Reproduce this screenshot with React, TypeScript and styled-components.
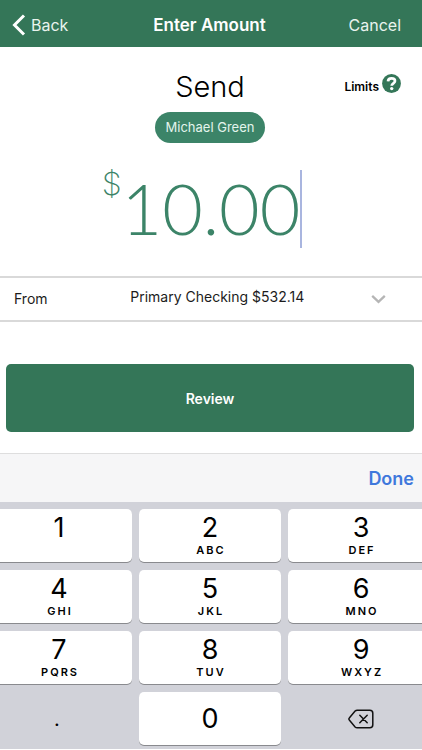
import React, { useState } from "react";
import styled, { createGlobalStyle } from "styled-components";

const GlobalStyle = createGlobalStyle`
  *, *::before, *::after { box-sizing: border-box; }
  body {
    margin: 0;
    background: #fff;
    color: #000;
    font-family: Inter, "Liberation Sans", sans-serif;
    overflow-x: hidden;
  }
  button, input, select { font: inherit; color: inherit; margin: 0; }
  button { border: 0; background: none; padding: 0; cursor: pointer; }
`;

const green = "#347658";
const lightGreen = "#3c8468";

const Screen = styled.div`
  display: flex;
  flex-direction: column;
`;

const NavBar = styled.header`
  display: grid;
  grid-template-columns: 1fr auto 1fr;
  align-items: center;
  height: 47px;
  padding: 2px 15px 0 12px;
  background: ${green};
  color: #fff;
`;

const NavTitle = styled.h1`
  margin: 0;
  font-size: 17px;
  font-weight: 600;
  line-height: 24px;
`;

const NavButton = styled.button<{ $end?: boolean }>`
  display: flex;
  align-items: center;
  gap: 5px;
  justify-self: ${(p) => (p.$end ? "end" : "start")};
  padding-right: ${(p) => (p.$end ? 6 : 0)}px;
  font-size: 16px;
  line-height: 24px;
  color: #e9f3ee;
`;

const Recipient = styled.section`
  display: grid;
  grid-template-columns: 1fr auto 1fr;
  justify-items: center;
  padding: 22px 21px 0 19px;
`;

const Heading = styled.h2`
  grid-column: 2;
  margin: 0;
  font-size: 29px;
  font-weight: 300;
  line-height: 36px;
`;

const LimitsLink = styled.a`
  grid-column: 3;
  justify-self: end;
  align-self: start;
  display: flex;
  align-items: flex-end;
  gap: 3px;
  padding-top: 5px;
  font-size: 12px;
  font-weight: 600;
  line-height: 16px;
  color: #000;
  text-decoration: none;

  svg { margin-bottom: 2px; }
`;

const NamePill = styled.span`
  grid-column: 1 / -1;
  margin-top: 7px;
  padding: 0 11px;
  border-radius: 16px;
  background: ${lightGreen};
  color: #e3f4ec;
  font-size: 13px;
  line-height: 31px;
`;

const AmountRow = styled.label`
  display: flex;
  justify-content: center;
  height: 133px;
  padding: 27px 18px 0 0;
  color: ${lightGreen};
`;

const Currency = styled.span`
  font-size: 32px;
  font-weight: 200;
  line-height: 28px;
`;

const AmountInput = styled.input`
  field-sizing: content;
  min-width: 0;
  height: 76px;
  padding: 0;
  border: 0;
  outline: 0;
  background: none;
  font-family: Lato, Inter, sans-serif;
  font-size: 70px;
  font-weight: 300;
  line-height: 76px;
  caret-color: transparent;
`;

const Caret = styled.span`
  width: 2px;
  height: 78px;
  background: #a9b5df;
`;

const AccountRow = styled.div`
  display: flex;
  align-items: center;
  height: 46px;
  padding: 0 36px 0 14px;
  border-top: 2px solid #d9d9d9;
  border-bottom: 2px solid #d9d9d9;
  font-size: 14px;
  line-height: 20px;
  color: #1c1c1c;
`;

const AccountSelect = styled.select`
  flex: 1;
  min-width: 0;
  height: 40px;
  padding: 0 0 4px 16px;
  border: 0;
  appearance: none;
  background: none;
  text-align: center;
  text-align-last: center;
`;

const ReviewButton = styled.button`
  height: 68px;
  margin: 42px 8px 0 6px;
  border-radius: 5px;
  background: ${green};
  color: #fff;
  font-size: 14px;
  font-weight: 600;
`;

const AccessoryBar = styled.div`
  display: flex;
  align-items: center;
  justify-content: flex-end;
  height: 49px;
  margin-top: 21px;
  padding: 2px 8px 0 0;
  border-top: 1px solid #dedede;
  background: #f6f6f7;
`;

const DoneButton = styled.button`
  font-size: 18px;
  font-weight: 600;
  line-height: 24px;
  color: #3f78dc;
`;

const Keypad = styled.div`
  display: grid;
  grid-template-columns: 146fr 142fr 146fr;
  gap: 8px 7px;
  margin: 0 -12px 0 -14px;
  padding: 7px 0 4px;
  background: #d1d2d9;
`;

const Key = styled.button<{ $plain?: boolean; $centered?: boolean }>`
  display: flex;
  flex-direction: column;
  align-items: center;
  justify-content: ${(p) => (p.$centered ? "center" : "flex-start")};
  height: 53px;
  padding-top: ${(p) => (p.$centered ? 0 : 4)}px;
  border-radius: 5px;
  background: ${(p) => (p.$plain ? "transparent" : "#fff")};
  box-shadow: ${(p) => (p.$plain ? "none" : "0 1px 0 #898a8e")};
`;

const Digit = styled.span`
  font-size: 27px;
  line-height: 30px;
`;

const Point = styled.span`
  padding-right: 4px;
  font-size: 20px;
  line-height: 24px;
`;

const Letters = styled.span`
  padding-left: 2px;
  font-size: 11px;
  font-weight: 600;
  line-height: 14px;
  letter-spacing: 2px;
`;

const KEYS: [string, string][] = [
  ["1", ""],
  ["2", "ABC"],
  ["3", "DEF"],
  ["4", "GHI"],
  ["5", "JKL"],
  ["6", "MNO"],
  ["7", "PQRS"],
  ["8", "TUV"],
  ["9", "WXYZ"],
];

const BackIcon = () => (
  <svg width="14" height="22" viewBox="0 0 14 22" fill="none" aria-hidden="true">
    <path d="M12 1.500 2.500 11l9.500 9.500" stroke="#fff" strokeWidth="3" />
  </svg>
);

const HelpIcon = () => (
  <svg width="19" height="19" viewBox="0 0 19 19" fill="none" aria-hidden="true">
    <circle cx="9.500" cy="9.500" r="9.400" fill={green} />
    <path
      d="M6 7.400C6.100 5.400 7.500 4.300 9.500 4.300c2 0 3.500 1 3.500 2.800 0 2.400-3.300 2.200-3.300 4.700"
      stroke="#fff"
      strokeWidth="2.700"
    />
    <circle cx="9.700" cy="14.600" r="1.700" fill="#fff" />
  </svg>
);

const ChevronIcon = () => (
  <svg width="15" height="10" viewBox="0 0 15 10" fill="none" aria-hidden="true">
    <path d="m1.200 1.800 6.300 6 6.300-6" stroke="#b5b5b5" strokeWidth="2.300" />
  </svg>
);

const DeleteIcon = () => (
  <svg width="26" height="20" viewBox="0 0 26 20" fill="none" stroke="#111" aria-hidden="true">
    <path
      d="M9.200 1.200h12.600a3 3 0 0 1 3 3v11.600a3 3 0 0 1-3 3H9.200a3 3 0 0 1-2.100-.9L1.300 11a1.400 1.400 0 0 1 0-2l5.800-6.900a3 3 0 0 1 2.100-.9Z"
      strokeWidth="1.500"
    />
    <path d="m11.800 6.300 7.400 7.400m0-7.400-7.400 7.400" strokeWidth="1.500" strokeLinecap="round" />
  </svg>
);

export default function App() {
  const [amount, setAmount] = useState("10.00");
  const press = (key: string) => setAmount((value) => value + key);

  return (
    <>
      <GlobalStyle />
      <Screen>
        <NavBar>
          <NavButton>
            <BackIcon />
            Back
          </NavButton>
          <NavTitle>Enter Amount</NavTitle>
          <NavButton $end>Cancel</NavButton>
        </NavBar>

        <main>
          <Recipient>
            <Heading>Send</Heading>
            <LimitsLink href="#limits">
              Limits
              <HelpIcon />
            </LimitsLink>
            <NamePill>Michael Green</NamePill>
          </Recipient>

          <AmountRow>
            <Currency>$</Currency>
            <AmountInput
              aria-label="Amount"
              inputMode="decimal"
              value={amount}
              onChange={(e) => setAmount(e.target.value)}
            />
            <Caret />
          </AmountRow>

          <AccountRow>
            <label htmlFor="account">From</label>
            <AccountSelect id="account">
              <option>Primary Checking $532.14</option>
            </AccountSelect>
            <ChevronIcon />
          </AccountRow>
        </main>

        <ReviewButton>Review</ReviewButton>

        <AccessoryBar>
          <DoneButton>Done</DoneButton>
        </AccessoryBar>

        <Keypad>
          {KEYS.map(([digit, letters]) => (
            <Key key={digit} onClick={() => press(digit)}>
              <Digit>{digit}</Digit>
              <Letters>{letters}</Letters>
            </Key>
          ))}
          <Key $plain $centered onClick={() => press(".")}>
            <Point>.</Point>
          </Key>
          <Key $centered onClick={() => press("0")}>
            <Digit>0</Digit>
          </Key>
          <Key
            $plain
            $centered
            aria-label="Delete"
            onClick={() => setAmount((value) => value.slice(0, -1))}
          >
            <DeleteIcon />
          </Key>
        </Keypad>
      </Screen>
    </>
  );
}
